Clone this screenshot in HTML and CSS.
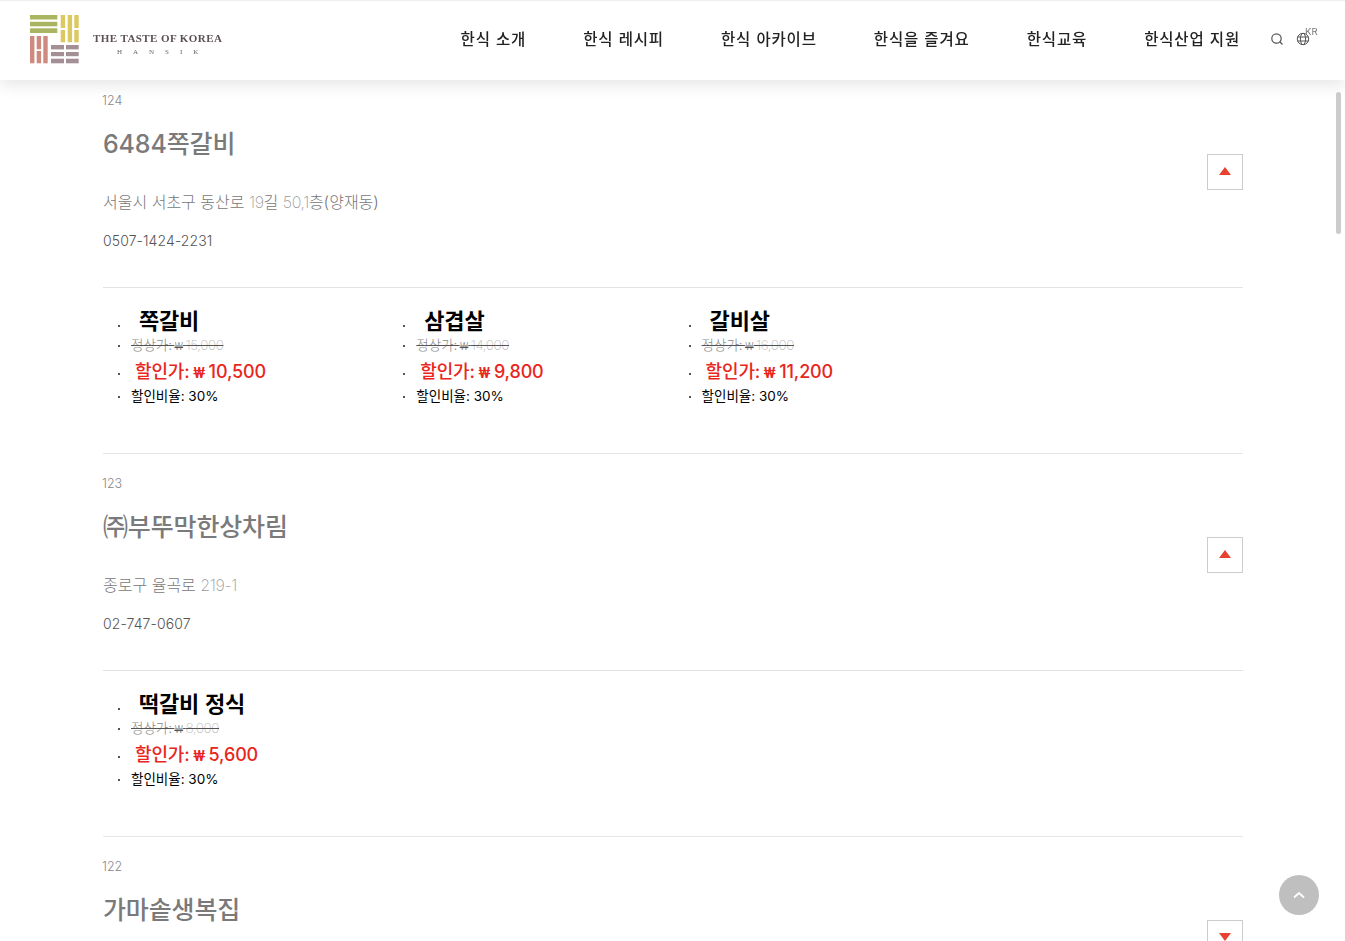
FILE: index.html
```html
<!DOCTYPE html>
<html lang="ko">
<head>
<meta charset="utf-8">
<title>The Taste of Korea</title>
<link rel="stylesheet" href="styles.css">
</head>
<body>
<header class="site-header">
  <a class="logo" href="#">
    <svg class="logo-mark" width="49" height="49" viewBox="0 0 49 49">
      <g fill="#aab562"><rect x="0" y="0" width="27.300" height="4.500"/><rect x="0" y="6.800" width="27.300" height="4.500"/><rect x="0" y="13.300" width="27.300" height="4.700"/></g>
      <g fill="#dcc961"><rect x="30.700" y="0" width="4.400" height="13"/><rect x="30.700" y="15" width="4.400" height="12.300"/><rect x="37.700" y="0" width="4.400" height="27.300"/><rect x="44.300" y="0" width="4.400" height="13"/><rect x="44.300" y="15" width="4.400" height="12.300"/></g>
      <g fill="#cf8a80"><rect x="0" y="21" width="4.400" height="27.300"/><rect x="6.700" y="21" width="4.400" height="13.300"/><rect x="6.700" y="36" width="4.400" height="12.300"/><rect x="13.300" y="21" width="4.400" height="27.300"/></g>
      <g fill="#a38f94"><rect x="21" y="30" width="13" height="4.400"/><rect x="36" y="30" width="12.700" height="4.400"/><rect x="21" y="37" width="13" height="4.200"/><rect x="36" y="37" width="12.700" height="4.200"/><rect x="21" y="43.700" width="13" height="4.600"/><rect x="36" y="43.700" width="12.700" height="4.600"/></g>
    </svg>
    <span class="logo-text">
      <span class="logo-title">THE TASTE OF KOREA</span>
      <span class="logo-sub">HANSIK</span>
    </span>
  </a>
  <nav class="gnb">
    <a href="#">한식 소개</a>
    <a href="#">한식 레시피</a>
    <a href="#">한식 아카이브</a>
    <a href="#">한식을 즐겨요</a>
    <a href="#">한식교육</a>
    <a href="#">한식산업 지원</a>
  </nav>
  <div class="tools">
    <svg class="icon-search" width="14" height="14" viewBox="0 0 14 14" fill="none" stroke="#555" stroke-width="1.200"><circle cx="6.500" cy="6.500" r="4.700"/><path d="M10 10l2.500 2.500"/></svg>
    <span class="lang">
      <svg width="14" height="14" viewBox="0 0 14 14" fill="none" stroke="#555" stroke-width="1"><circle cx="7" cy="7" r="5.700"/><ellipse cx="7" cy="7" rx="2.600" ry="5.700"/><path d="M1.500 5h11M1.500 9h11"/></svg>
      <span class="lang-code">KR</span>
    </span>
  </div>
</header>

<main class="list">
  <article class="store">
    <div class="store-head">
      <div class="store-info">
        <p class="store-no">124</p>
        <h2 class="store-name">6484쪽갈비</h2>
        <p class="store-addr">서울시 서초구 동산로 <span class="thin">19</span>길 <span class="thin">50,1</span>층(양재동)</p>
        <p class="store-tel">0507-1424-2231</p>
      </div>
      <button class="toggle" type="button"><span class="tri-up"></span></button>
    </div>
    <div class="menus">
      <ul class="menu">
        <li class="m-name">쪽갈비</li>
        <li class="m-price">정상가: <span class="won">₩</span> <span class="thin">15,000</span></li>
        <li class="m-sale">할인가: <span class="won">₩</span> 10,500</li>
        <li class="m-rate">할인비율: 30%</li>
      </ul>
      <ul class="menu">
        <li class="m-name">삼겹살</li>
        <li class="m-price">정상가: <span class="won">₩</span> <span class="thin">14,000</span></li>
        <li class="m-sale">할인가: <span class="won">₩</span> 9,800</li>
        <li class="m-rate">할인비율: 30%</li>
      </ul>
      <ul class="menu">
        <li class="m-name">갈비살</li>
        <li class="m-price">정상가: <span class="won">₩</span> <span class="thin">16,000</span></li>
        <li class="m-sale">할인가: <span class="won">₩</span> 11,200</li>
        <li class="m-rate">할인비율: 30%</li>
      </ul>
    </div>
  </article>

  <article class="store">
    <div class="store-head">
      <div class="store-info">
        <p class="store-no">123</p>
        <h2 class="store-name">㈜부뚜막한상차림</h2>
        <p class="store-addr">종로구 율곡로 <span class="thin">219-1</span></p>
        <p class="store-tel">02-747-0607</p>
      </div>
      <button class="toggle" type="button"><span class="tri-up"></span></button>
    </div>
    <div class="menus">
      <ul class="menu">
        <li class="m-name">떡갈비 정식</li>
        <li class="m-price">정상가: <span class="won">₩</span> <span class="thin">8,000</span></li>
        <li class="m-sale">할인가: <span class="won">₩</span> 5,600</li>
        <li class="m-rate">할인비율: 30%</li>
      </ul>
    </div>
  </article>

  <article class="store">
    <div class="store-head">
      <div class="store-info">
        <p class="store-no">122</p>
        <h2 class="store-name">가마솥생복집</h2>
      </div>
      <button class="toggle" type="button"><span class="tri-down"></span></button>
    </div>
  </article>
</main>

<div class="scrollbar"></div>
<a class="to-top" href="#">
  <svg width="12" height="8" viewBox="0 0 12 8" fill="none" stroke="#fff" stroke-width="1.800"><path d="M1 6.500l5-4.500 5 4.500"/></svg>
</a>
</body>
</html>
```
FILE: styles.css
```css
* { box-sizing: border-box; }
html, body { margin: 0; height: 100%; }
body {
  overflow: hidden;
  background: #fff;
  font-family: Inter, "Noto Sans CJK KR", sans-serif;
  color: #666;
}
a { color: inherit; text-decoration: none; }
p, h2, ul { margin: 0; padding: 0; }

.site-header {
  position: fixed;
  top: 0; left: 0; right: 0;
  z-index: 10;
  height: 80px;
  display: flex;
  align-items: center;
  padding: 0 28px 4px 30px;
  background: #fff;
  border-top: 1px solid #eee;
  box-shadow: 0 5px 15px rgba(0,0,0,.1);
}
.logo { display: flex; align-items: flex-end; gap: 14px; margin-top: 1px; }
.logo-mark { display: block; }
.logo-text { display: flex; flex-direction: column; align-items: center; margin-bottom: 7px; font-family: "Liberation Serif", serif; }
.logo-title { font-size: 11px; font-weight: 700; letter-spacing: .42px; color: #5c5052; line-height: 14px; }
.logo-sub { font-size: 7px; letter-spacing: 11px; color: #6f6466; line-height: 10px; margin: 2px -11px 0 0; }

.gnb {
  display: flex;
  gap: 57px;
  margin: 0 0 2px auto;
  font-family: "Noto Sans CJK KR", sans-serif;
  font-size: 15.500px;
  font-weight: 500;
  letter-spacing: .85px;
  color: #222;
}
.tools { display: flex; align-items: center; gap: 12px; margin-left: 30px; }
.icon-search { display: block; }
.lang { position: relative; display: block; width: 14px; height: 14px; margin-right: 7px; }
.lang svg { display: block; }
.lang-code { position: absolute; left: 9px; top: -6px; font-size: 9.500px; color: #777; }

.list { width: 1140px; margin-left: 103px; padding-top: 71px; }
.store { border-bottom: 1px solid #e6e6e6; height: 383px; }
.store-head {
  display: flex;
  justify-content: space-between;
  align-items: flex-start;
  height: 217px;
  border-bottom: 1px solid #e2e2e2;
}
.store-no { margin: 21px 0 0 -1px; font-size: 12.500px; font-weight: 300; line-height: 18px; color: #888; }
.store-name {
  margin-top: 16px;
  font-family: Inter, "Noto Sans CJK KR", sans-serif;
  font-size: 25px;
  font-weight: 500;
  letter-spacing: -.15px;
  line-height: 36px;
  color: #7a7a7a;
}
.store-addr { margin-top: 28px; font-size: 16px; font-weight: 300; line-height: 24px; color: #777; }
.thin { font-weight: 200; color: #999; letter-spacing: -.4px; }
.store-tel { margin-top: 15px; font-size: 14px; font-weight: 300; letter-spacing: .1px; line-height: 24px; color: #555; }
.toggle {
  display: flex;
  align-items: center;
  justify-content: center;
  width: 36px;
  height: 36px;
  margin-top: 83px;
  padding: 0 0 2px;
  background: #fff;
  border: 1px solid #ccc;
}
.tri-up, .tri-down { width: 0; height: 0; border-left: 6px solid transparent; border-right: 6px solid transparent; }
.tri-up { border-bottom: 8px solid #e8412f; }
.tri-down { border-top: 8px solid #e8412f; }

.menus { display: grid; grid-template-columns: repeat(4, 285.300px); padding-top: 15px; }
.menu { list-style: none; color: #000; }
.menu li { position: relative; padding-left: 28px; }
.menu li::before {
  content: "";
  position: absolute;
  left: 15px;
  bottom: 9px;
  width: 2px;
  height: 2px;
  background: #555;
}
.menu .m-sale::before { bottom: 14px; }
.menu .m-rate::before { bottom: 5px; }
.won { font-family: Roboto, sans-serif; font-size: .85em; }
.m-name { font-family: "Noto Sans CJK KR", sans-serif; font-size: 22px; font-weight: 700; letter-spacing: -.2px; line-height: 33px; text-indent: 8px; }
.m-price { font-size: 13.500px; font-weight: 300; word-spacing: -1.500px; line-height: 19px; color: #888; text-decoration: line-through; text-decoration-color: #555; }
.m-price .thin { color: #bbb; }
.m-sale { font-size: 18px; font-weight: 500; letter-spacing: -.15px; word-spacing: -1px; line-height: 32px; color: #e8261c; text-indent: 4px; }
.m-rate { font-size: 13.500px; font-weight: 400; line-height: 14px; color: #000; }

.scrollbar {
  position: fixed;
  right: 4px;
  top: 92px;
  width: 5px;
  height: 142px;
  border-radius: 3px;
  background: #ccc;
}
.to-top {
  position: fixed;
  right: 26px;
  bottom: 26px;
  width: 40px;
  height: 40px;
  border-radius: 50%;
  background: #bfbfbf;
  display: flex;
  align-items: center;
  justify-content: center;
}
```
